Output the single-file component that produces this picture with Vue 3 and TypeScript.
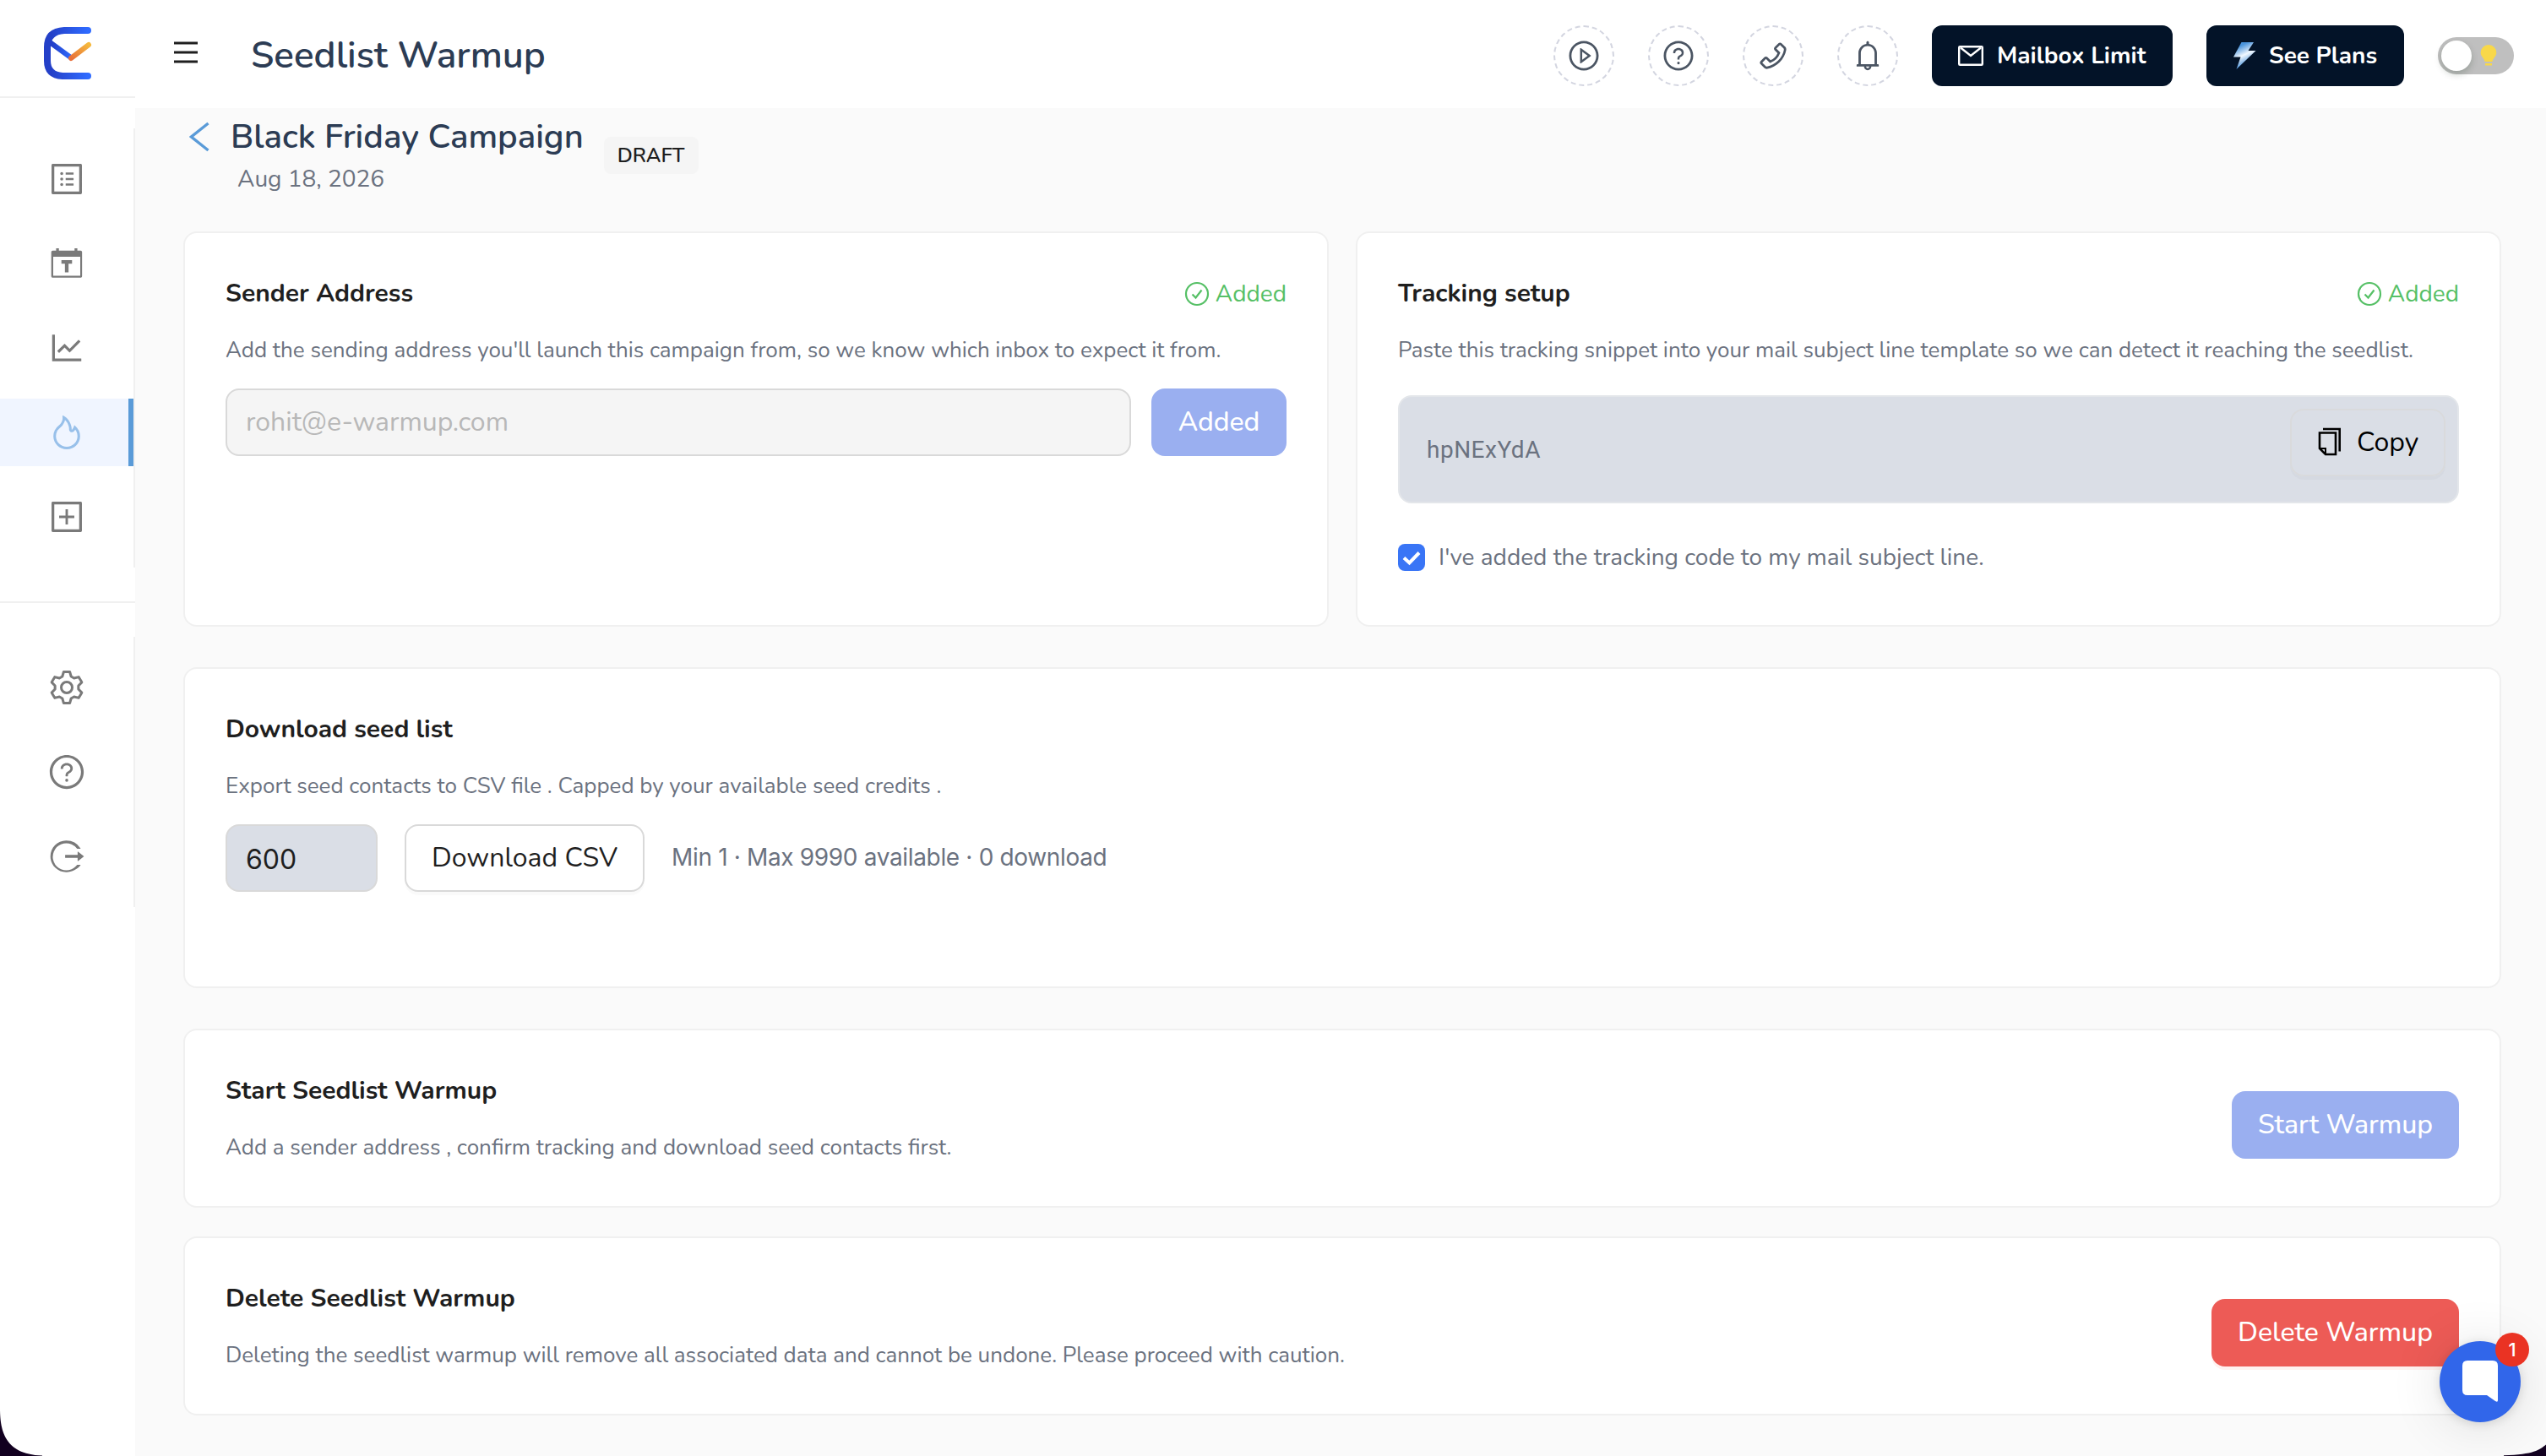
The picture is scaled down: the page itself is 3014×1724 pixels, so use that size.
<script setup lang="ts">
import { ref } from 'vue'

const amount = ref<string>('600')
const email = ref<string>('rohit@e-warmup.com')

interface NavItem {
  id: string
  active?: boolean
}

const mainNav: NavItem[] = [
  { id: 'list' },
  { id: 'calendar' },
  { id: 'chart' },
  { id: 'fire', active: true },
  { id: 'plus' },
]
const footNav: NavItem[] = [{ id: 'gear' }, { id: 'help' }, { id: 'logout' }]
const quickActions: string[] = ['play', 'help', 'phone', 'bell']

const shapes: Record<string, string> = {
  list: 'M880 112H144c-17.700 0-32 14.300-32 32v736c0 17.700 14.300 32 32 32h736c17.700 0 32-14.300 32-32V144c0-17.700-14.300-32-32-32zM840 840H184V184h656zM484 340h208v56H484zM484 484h208v56H484zM484 628h208v56H484zM340 368a40 40 0 1080 0 40 40 0 10-80 0zM340 512a40 40 0 1080 0 40 40 0 10-80 0zM340 656a40 40 0 1080 0 40 40 0 10-80 0z',
  calendar: 'M232 110h74v62h412v-62h74v62h84c22 0 40 18 40 40v634c0 22-18 40-40 40H144c-22 0-40-18-40-40V212c0-22 18-40 40-40h88zM156 336v498h712V336zM372 424h280v92H560v232h-96V516h-92z',
  chart: 'M888 792H200V168c0-4.400-3.600-8-8-8h-56c-4.400 0-8 3.600-8 8v688c0 4.400 3.600 8 8 8h752c4.400 0 8-3.600 8-8v-56c0-4.400-3.600-8-8-8zM305.800 637.700c3.100 3.100 8.100 3.100 11.300 0l138.300-137.600L583 628.500c3.100 3.100 8.200 3.100 11.300 0l275.400-275.300c3.100-3.100 3.100-8.200 0-11.300l-39.600-39.600a8.030 8.030 0 00-11.300 0l-230 229.900L461.400 404a8.030 8.030 0 00-11.300 0L266.300 586.700a8.030 8.030 0 000 11.300l39.500 39.700z',
  fire: 'M834.100 469.200A347.490 347.490 0 00751.200 354l-29.100-26.700a8.090 8.090 0 00-13 3.300l-13 37.300c-8.100 23.400-23 47.300-44.100 70.800-1.400 1.500-3 1.900-4.100 2-1.100.100-2.800-.100-4.300-1.500-1.400-1.200-2.100-3-2-4.800 3.700-60.200-14.300-128.100-53.700-202C555.300 171 510 123.100 453.400 89.700l-41.300-24.300c-5.400-3.200-12.300 1-12 7.300l2.200 48c1.500 32.800-2.300 61.800-11.300 85.900-11 29.500-26.800 56.900-47 81.500a295.640 295.640 0 01-47.500 46.100 352.600 352.600 0 00-100.300 121.500A347.750 347.750 0 00160 610c0 47.200 9.300 92.900 27.700 136a349.400 349.400 0 0075.500 110.900c32.400 32 70 57.200 111.900 74.700C418.500 949.800 464.500 959 512 959s93.500-9.200 136.900-27.300A348.600 348.600 0 00760.800 857c32.400-32 57.800-69.400 75.500-110.900a344.200 344.200 0 0027.700-136c0-48.800-10-96.200-29.900-140.900zM713 808.500c-53.700 53.200-125 82.400-201 82.400s-147.300-29.200-201-82.400c-53.500-53.100-83-123.500-83-198.400 0-43.500 9.800-85.200 29.100-124 18.800-37.900 46.800-71.800 80.800-97.900a349.600 349.600 0 0058.600-56.800c25-30.500 44.600-64.500 58.200-101a240 240 0 0012.100-46.500c24.100 22.200 44.300 49 61.200 80.400 33.400 62.600 48.800 118.300 45.800 165.700a74.010 74.010 0 0024.400 59.800 73.360 73.360 0 0053.400 18.800c19.700-1 37.800-9.700 51-24.400 13.300-14.900 24.800-30.100 34.400-45.600 14 17.300 25.400 36.800 34.300 57.800 15.800 36.500 23.800 74.900 23.800 114 0 74.800-29.500 145.200-83 198.200z',
  plus: 'M880 112H144c-17.700 0-32 14.300-32 32v736c0 17.700 14.300 32 32 32h736c17.700 0 32-14.300 32-32V144c0-17.700-14.300-32-32-32zM840 840H184V184h656zM480 312h64v168h168v64H544v168h-64V544H312v-64h168z',
  help: 'M512 64C264.600 64 64 264.600 64 512s200.600 448 448 448 448-200.600 448-448S759.400 64 512 64zM512 888c-207.700 0-376-168.300-376-376s168.300-376 376-376 376 168.300 376 376-168.300 376-376 376zM623.600 316.700C593.600 290.400 554 276 512 276s-81.600 14.500-111.600 40.700C369.200 344 352 380.700 352 420v7.600c0 4.400 3.600 8 8 8h48c4.400 0 8-3.600 8-8V420c0-44.100 43.100-80 96-80s96 35.900 96 80c0 31.100-22 59.600-56.100 72.700-21.200 8.100-39.200 22.300-52.100 40.900-13.100 19-19.900 41.800-19.900 64.900V620c0 4.400 3.600 8 8 8h48c4.400 0 8-3.600 8-8v-22.700a48.300 48.300 0 0130.900-44.800c59-22.700 97.100-74.700 97.100-132.500.100-39.300-17.100-76-48.300-103.300zM472 732a40 40 0 1080 0 40 40 0 10-80 0z',
  play: 'M512 64C264.600 64 64 264.600 64 512s200.600 448 448 448 448-200.600 448-448S759.400 64 512 64zM512 888c-207.700 0-376-168.300-376-376s168.300-376 376-376 376 168.300 376 376-168.300 376-376 376zM719.400 499.100l-296.100-215A15.900 15.900 0 00398 297v430c0 13.100 14.800 20.500 25.300 12.900l296.100-215a15.900 15.900 0 000-25.800zM461.800 633.100V390.900L628.500 512z',
  phone: 'M877.100 238.700L770.600 132.300c-13-13-30.400-20.300-48.800-20.300s-35.800 7.200-48.800 20.300L558.300 246.800c-13 13-20.300 30.500-20.300 48.900 0 18.500 7.200 35.800 20.300 48.900l89.600 89.700a405.460 405.460 0 01-86.400 127.300c-36.700 36.900-79.600 66-127.200 86.600l-89.600-89.700c-13-13-30.400-20.300-48.800-20.300a68.200 68.200 0 00-48.800 20.300L132.300 673c-13 13-20.300 30.500-20.300 48.900 0 18.500 7.200 35.800 20.300 48.900l106.400 106.400c22.200 22.200 52.800 34.900 84.200 34.900 6.500 0 12.800-.500 19.200-1.600 132.400-21.800 263.800-92.300 369.900-198.300C818 606 888.400 474.600 910.400 342.100c6.300-37.600-6.300-76.300-33.300-103.400zM839.500 330.200c-19.500 117.900-82.900 235.500-178.400 331s-213 158.900-330.900 178.400c-14.800 2.500-30-2.500-40.800-13.200L184.900 721.900 295.700 611l119.800 120 .900.900 21.600-8a481.290 481.290 0 00285.700-285.800l8-21.600-120.800-120.700 110.800-110.900 104.500 104.500c10.800 10.800 15.800 26 13.300 40.800z',
  bell: 'M816 768h-24V428c0-141.100-104.300-257.800-240-277.200V112c0-22.100-17.900-40-40-40s-40 17.900-40 40v38.800C336.300 170.200 232 286.900 232 428v340h-24c-17.700 0-32 14.300-32 32v32c0 4.400 3.600 8 8 8h216c0 61.800 50.200 112 112 112s112-50.200 112-112h216c4.400 0 8-3.600 8-8v-32c0-17.700-14.300-32-32-32zM512 888c-26.500 0-48-21.500-48-48h96c0 26.500-21.500 48-48 48zM304 768V428c0-55.600 21.600-107.800 60.900-147.100S456.400 220 512 220c55.600 0 107.800 21.600 147.100 60.900S720 372.400 720 428v340z',
  logout: 'M868 735h-73c-5 0-9 2-13 6a353 353 0 01-31 34 351 351 0 01-112 76 353 353 0 01-276 0 351 351 0 01-189-189 353 353 0 010-276 351 351 0 01189-189 353 353 0 01276 0 351 351 0 01143 110c3 4 8 6 13 6h73c7 0 11-7 7-13A446 446 0 00494 96C264 98 80 285 82 516c2 227 187 412 417 412 156 0 296-79 376-180 4-6 0-13-7-13zM960 505L812 389c-5-4-13-1-13 6v79H470v76h329v79c0 7 8 11 13 6l148-117c4-3 4-9 0-13z',
}

// Outline of the six-toothed cog, built around the origin
function cog(): string {
  const pts: string[] = []
  for (let k = 0; k < 6; k++) {
    const a = (k * Math.PI) / 3
    const rot = (x: number, y: number): string =>
      `${(x * Math.cos(a) - y * Math.sin(a)).toFixed(2)} ${(x * Math.sin(a) + y * Math.cos(a)).toFixed(2)}`
    pts.push(`${k ? 'L' : 'M'}${rot(-5.2, -13)}L${rot(-3.6, -18.500)}L${rot(3.6, -18.500)}L${rot(5.2, -13)}`)
  }
  return pts.join('') + 'Z'
}
const cogPath = cog()
</script>

<template>
  <div class="app">
    <aside class="sidebar">
      <div class="brand">
        <svg width="58" height="64" viewBox="0 0 58 64" fill="none">
          <defs>
            <linearGradient id="brandBlue" x1="0" x2="1">
              <stop offset="0.1" stop-color="#2440c8" />
              <stop offset="1" stop-color="#2f6bff" />
            </linearGradient>
            <linearGradient id="brandOrange" x1="0" y1="1" x2="1" y2="0">
              <stop offset="0" stop-color="#e8703a" />
              <stop offset="1" stop-color="#f5b83d" />
            </linearGradient>
          </defs>
          <path d="M52 4H24Q4 5 4 24V40Q4 57 22 58H52" stroke="url(#brandBlue)" stroke-width="8" stroke-linecap="round" />
          <path d="M7 18L33 37" stroke="url(#brandBlue)" stroke-width="6" />
          <path d="M32 37L53 21" stroke="url(#brandOrange)" stroke-width="6" stroke-linecap="round" />
        </svg>
      </div>
      <nav class="nav nav-main">
        <a v-for="n in mainNav" :key="n.id" class="nav-item" :class="{ active: n.active }">
          <svg class="nav-icon" viewBox="0 0 1024 1024"><path :d="shapes[n.id]" fill-rule="evenodd" /></svg>
        </a>
      </nav>
      <div class="nav-rule"></div>
      <nav class="nav nav-foot">
        <a v-for="n in footNav" :key="n.id" class="nav-item">
          <svg v-if="n.id === 'gear'" class="nav-icon cog" viewBox="-23 -23 46 46">
            <path :d="cogPath" /><circle r="6.500" />
          </svg>
          <svg v-else class="nav-icon" viewBox="0 0 1024 1024"><path :d="shapes[n.id]" fill-rule="evenodd" /></svg>
        </a>
      </nav>
    </aside>

    <div class="content">
      <header class="topbar">
        <svg class="burger" width="28" height="26" viewBox="0 0 28 26"><path d="M0 2H28M0 13H28M0 24H28" /></svg>
        <h1 class="title">Seedlist Warmup</h1>
        <div class="quick">
          <button v-for="q in quickActions" :key="q" class="round">
            <svg width="40" height="40" viewBox="0 0 1024 1024"><path :d="shapes[q]" fill-rule="evenodd" /></svg>
          </button>
        </div>
        <button class="dark mailbox">
          <svg width="30" height="24" viewBox="0 0 30 24" fill="none" stroke="#fff" stroke-width="2.400">
            <rect x="1.200" y="1.200" width="27.600" height="21.600" rx="1" /><path d="M3 2.500L15 12L27 2.500" />
          </svg>
          <span>Mailbox Limit</span>
        </button>
        <button class="dark plans">
          <svg width="28" height="34" viewBox="0 0 28 34">
            <defs>
              <linearGradient id="boltFill" x1="0.200" y1="0" x2="0.600" y2="1">
                <stop offset="0.150" stop-color="#4a94dc" />
                <stop offset="0.500" stop-color="#f2f8ff" />
                <stop offset="0.850" stop-color="#4a94dc" />
              </linearGradient>
            </defs>
            <path d="M10.500 1H25L18.500 11H27.500L4.500 33L9.500 18.500H1Z" fill="url(#boltFill)" />
          </svg>
          <span>See Plans</span>
        </button>
        <div class="toggle">
          <span class="knob"></span>
          <svg width="20" height="26" viewBox="0 0 20 26" fill="#f8d84a">
            <path d="M10 0A9.300 9.300 0 0 0 .700 9.300C.700 14 5 16 5.500 20H14.500C15 16 19.300 14 19.300 9.300A9.300 9.300 0 0 0 10 0ZM6 22H14V24.500H6Z" />
          </svg>
        </div>
      </header>

      <main class="main">
        <div class="page-head">
          <svg class="back" width="24" height="36" viewBox="0 0 24 36"><path d="M22.500 2L2.500 18L22.500 34" /></svg>
          <div class="page-names">
            <h2>Black Friday Campaign</h2>
            <p>Aug 18, 2026</p>
          </div>
          <span class="tag">DRAFT</span>
        </div>

        <div class="pair">
          <section class="card">
            <div class="card-head">
              <h3>Sender Address</h3>
              <span class="added">
                <svg width="30" height="30" viewBox="0 0 30 30"><circle cx="15" cy="15" r="13" /><path d="M9.500 15.500L13.500 19.500L20.500 10.500" /></svg>
                <span>Added</span>
              </span>
            </div>
            <p class="desc">Add the sending address you'll launch this campaign from, so we know which inbox to expect it from.</p>
            <div class="sender">
              <div class="field disabled">{{ email }}</div>
              <button class="btn primary add">Added</button>
            </div>
          </section>

          <section class="card">
            <div class="card-head">
              <h3>Tracking setup</h3>
              <span class="added">
                <svg width="30" height="30" viewBox="0 0 30 30"><circle cx="15" cy="15" r="13" /><path d="M9.500 15.500L13.500 19.500L20.500 10.500" /></svg>
                <span>Added</span>
              </span>
            </div>
            <p class="desc">Paste this tracking snippet into your mail subject line template so we can detect it reaching the seedlist.</p>
            <div class="snippet">
              <code>hpNExYdA</code>
              <button class="btn copy">
                <svg width="28" height="34" viewBox="0 0 28 34" fill="none" stroke="#000" stroke-width="2.600">
                  <path d="M6 2H25.700V28.500" />
                  <path d="M2 6.500H21V32H9L2 25Z" /><path d="M2 25H9V32" stroke-width="2" />
                </svg>
                <span>Copy</span>
              </button>
            </div>
            <label class="confirm">
              <span class="box"><svg width="32" height="32" viewBox="0 0 32 32"><path d="M7 16.500L13.500 22.500L25 10.500" /></svg></span>
              <span>I've added the tracking code to my mail subject line.</span>
            </label>
          </section>
        </div>

        <section class="card download">
          <div class="card-head"><h3>Download seed list</h3></div>
          <p class="desc">Export seed contacts to CSV file . Capped by your available seed credits .</p>
          <div class="export">
            <div class="field amount">{{ amount }}</div>
            <button class="btn outline">Download CSV</button>
            <span class="hint">Min 1 · Max 9990 available · 0 download</span>
          </div>
        </section>

        <section class="card action start">
          <div>
            <div class="card-head"><h3>Start Seedlist Warmup</h3></div>
            <p class="desc">Add a sender address , confirm tracking and download seed contacts first.</p>
          </div>
          <button class="btn primary go">Start Warmup</button>
        </section>

        <section class="card action">
          <div>
            <div class="card-head"><h3>Delete Seedlist Warmup</h3></div>
            <p class="desc">Deleting the seedlist warmup will remove all associated data and cannot be undone. Please proceed with caution.</p>
          </div>
          <button class="btn danger">Delete Warmup</button>
        </section>
      </main>
    </div>

    <svg class="corner left" width="66" height="62" viewBox="0 0 66 62"><path d="M0 4C0 29 3.500 60 50 61.500V62H0Z" /></svg>
    <svg class="corner right" width="52" height="16" viewBox="0 0 52 16"><path d="M52 2.500C44 9 38 14 2 15.300V16H52Z" /></svg>

    <div class="chat">
      <svg width="42" height="50" viewBox="0 0 42 50"><path d="M6 0H36Q42 0 42 6V47Q42 50 39 48L29 41H6Q0 41 0 35V6Q0 0 6 0Z" fill="#fff" /></svg>
      <span class="badge">1</span>
    </div>
  </div>
</template>

<style>
body {
  margin: 0;
  background: #fff;
}
</style>

<style scoped>
* {
  box-sizing: border-box;
}
h1, h2, h3, p {
  margin: 0;
}
button {
  font: inherit;
  border: 0;
  padding: 0;
}
svg {
  display: block;
  flex: none;
}
.app {
  position: relative;
  display: flex;
  width: 3014px;
  height: 1724px;
  overflow: hidden;
  background: #fafafa;
  font-family: Nunito, Lato, 'Open Sans', sans-serif;
  color: #1f1f1f;
}

.sidebar {
  width: 160px;
  flex: none;
  display: flex;
  flex-direction: column;
  background: #fff;
}
.brand {
  height: 116px;
  padding: 32px 0 0 52px;
  border-bottom: 2px solid #f0f0f0;
}
.nav {
  display: flex;
  flex-direction: column;
  gap: 20px;
  padding: 20px 0;
  border-right: 2px solid #f0f0f0;
}
.nav-main {
  margin-top: 36px;
}
.nav-rule {
  height: 2px;
  margin: 40px 0;
  background: #f0f0f0;
}
.nav-item {
  height: 80px;
  display: flex;
  align-items: center;
  justify-content: center;
}
.nav-item.active {
  background: #f0f5ff;
  border-right: 6px solid #5a9bd8;
  padding-left: 6px;
}
.nav-icon {
  width: 46px;
  height: 46px;
  fill: #7a7a7a;
}
.nav-icon.cog {
  fill: none;
  stroke: #7a7a7a;
  stroke-width: 3;
  stroke-linejoin: round;
}
.active .nav-icon {
  fill: #98c0ea;
}

.content {
  flex: 1;
  min-width: 0;
}
.topbar {
  height: 128px;
  display: flex;
  align-items: center;
  padding: 4px 38px 0 46px;
  background: #fff;
}
.burger {
  margin-top: -8px;
  fill: none;
  stroke: #1f1f1f;
  stroke-width: 3;
}
.title {
  margin-left: 63px;
  font-size: 44px;
  font-weight: 600;
  line-height: 60px;
  color: #2c3c54;
}
.quick {
  display: flex;
  gap: 40px;
  margin-left: auto;
}
.round {
  width: 72px;
  height: 72px;
  border: 2px dashed #d3d5e0;
  border-radius: 50%;
  background: #fff;
  display: flex;
  align-items: center;
  justify-content: center;
}
.round svg {
  fill: #4b5563;
}
.dark {
  height: 72px;
  display: flex;
  align-items: center;
  border-radius: 12px;
  background: #031328;
  color: #fff;
  font-size: 28px;
  font-weight: 700;
}
.mailbox {
  width: 285px;
  margin-left: 40px;
  padding-left: 31px;
  gap: 16px;
}
.plans {
  width: 234px;
  margin-left: 40px;
  padding-left: 31px;
  gap: 15px;
}
.toggle {
  width: 90px;
  height: 44px;
  margin-left: 40px;
  padding-left: 4px;
  border-radius: 22px;
  background: #bfbfbf;
  display: flex;
  align-items: center;
  gap: 10px;
}
.knob {
  width: 36px;
  height: 36px;
  border-radius: 50%;
  background: #fff;
  box-shadow: 0 4px 8px rgba(0, 35, 11, 0.2);
}

.main {
  padding: 0 53px 0 57px;
}
.page-head {
  height: 146px;
  display: flex;
  align-items: flex-start;
}
.back {
  margin: 16px 0 0 7px;
  fill: none;
  stroke: #5a9bd8;
  stroke-width: 3.400;
}
.page-names {
  margin: 9px 0 0 25px;
}
.page-names h2 {
  font-size: 40px;
  font-weight: 600;
  line-height: 50px;
  color: #2c3c54;
}
.page-names p {
  margin: 5px 0 0 8px;
  font-size: 28px;
  line-height: 40px;
  color: #6b7280;
}
.tag {
  width: 112px;
  height: 44px;
  margin: 34px 0 0 24px;
  border-radius: 8px;
  background: #f5f5f5;
  font-size: 24px;
  font-weight: 600;
  line-height: 44px;
  text-align: center;
}

.pair {
  display: grid;
  grid-template-columns: 1fr 1fr;
  gap: 32px;
  height: 468px;
}
.card {
  padding: 48px;
  border: 2px solid #f0f0f0;
  border-radius: 16px;
  background: #fff;
}
.card-head {
  height: 48px;
  display: flex;
  align-items: center;
  justify-content: space-between;
}
h3 {
  font-size: 30px;
  font-weight: 700;
  line-height: 48px;
}
.added {
  display: flex;
  align-items: center;
  gap: 7px;
  font-size: 28px;
  line-height: 40px;
  color: #56c066;
}
.added svg {
  fill: none;
  stroke: #56c066;
  stroke-width: 2.200;
}
.desc {
  margin-top: 23px;
  font-size: 26px;
  line-height: 40px;
  color: #6b7280;
  white-space: nowrap;
}
.sender {
  display: flex;
  gap: 24px;
  margin-top: 25px;
}
.field {
  height: 80px;
  padding-left: 22px;
  border: 2px solid #d9d9d9;
  border-radius: 16px;
  font-size: 32px;
  line-height: 76px;
}
.disabled {
  flex: 1;
  background: #f5f5f5;
  color: #b8b8b8;
}
.btn {
  height: 80px;
  border-radius: 16px;
  font-size: 32px;
  line-height: 76px;
}
.primary {
  background: #9aaff0;
  color: #fff;
  font-weight: 500;
}
.add {
  width: 160px;
}
.snippet {
  height: 128px;
  margin-top: 33px;
  padding: 14px 14px 0 32px;
  border: 2px solid #e3e6ea;
  border-radius: 16px;
  background: #dadee6;
  display: flex;
  align-items: flex-start;
  justify-content: space-between;
}
.snippet code {
  margin-top: 29px;
  font-family: Roboto, 'Liberation Sans', sans-serif;
  font-size: 28px;
  line-height: 40px;
  letter-spacing: 0.500px;
  color: #6b7280;
}
.copy {
  width: 184px;
  border: 2px solid #d9dadc;
  background: transparent;
  box-shadow: 0 4px 0 rgba(0, 0, 0, 0.02);
  color: #000;
  display: flex;
  align-items: center;
  gap: 18px;
  padding-left: 31px;
}
.copy svg {
  margin-top: -3px;
}
.confirm {
  display: flex;
  align-items: center;
  gap: 16px;
  margin-top: 46px;
  font-size: 28px;
  line-height: 36px;
  color: #6b7280;
}
.box {
  width: 32px;
  height: 32px;
  border-radius: 8px;
  background: #3975f6;
}
.box path {
  fill: none;
  stroke: #fff;
  stroke-width: 4;
}
.download {
  height: 380px;
  margin-top: 48px;
}
.export {
  display: flex;
  align-items: center;
  gap: 32px;
  margin-top: 25px;
}
.amount {
  width: 180px;
  background: #dadee6;
  font-family: Inter, 'Liberation Sans', sans-serif;
  line-height: 79px;
}
.outline {
  width: 284px;
  border: 2px solid #d9d9d9;
  background: #fff;
  box-shadow: 0 4px 0 rgba(0, 0, 0, 0.02);
  color: #1f1f1f;
}
.hint {
  margin-top: -2px;
  font-family: Inter, 'Liberation Sans', sans-serif;
  font-size: 28px;
  line-height: 40px;
  letter-spacing: -0.340px;
  color: #6b7280;
}
.action {
  height: 212px;
  display: flex;
  justify-content: space-between;
  margin-top: 34px;
}
.action.start {
  margin-top: 48px;
}
.action .btn {
  margin-top: 24px;
}
.go {
  width: 269px;
}
.danger {
  width: 293px;
  background: #ed5b56;
  box-shadow: 0 4px 0 rgba(255, 38, 5, 0.06);
  color: #fff;
  font-weight: 500;
}

.corner {
  position: absolute;
  bottom: 0;
  fill: #120020;
}
.corner.left {
  left: 0;
}
.corner.right {
  right: 0;
}
.chat {
  position: absolute;
  left: 2888px;
  top: 1588px;
  width: 96px;
  height: 96px;
  border-radius: 50%;
  background: #3166ea;
  box-shadow: 0 2px 12px rgba(0, 0, 0, 0.12), 0 4px 64px rgba(0, 0, 0, 0.12);
  display: flex;
  align-items: center;
  justify-content: center;
}
.badge {
  position: absolute;
  left: 66px;
  top: -10px;
  width: 40px;
  height: 40px;
  border-radius: 50%;
  background: #ea3323;
  color: #fff;
  font-family: Inter, 'Liberation Sans', sans-serif;
  font-size: 22px;
  font-weight: 500;
  line-height: 40px;
  text-align: center;
}
</style>
